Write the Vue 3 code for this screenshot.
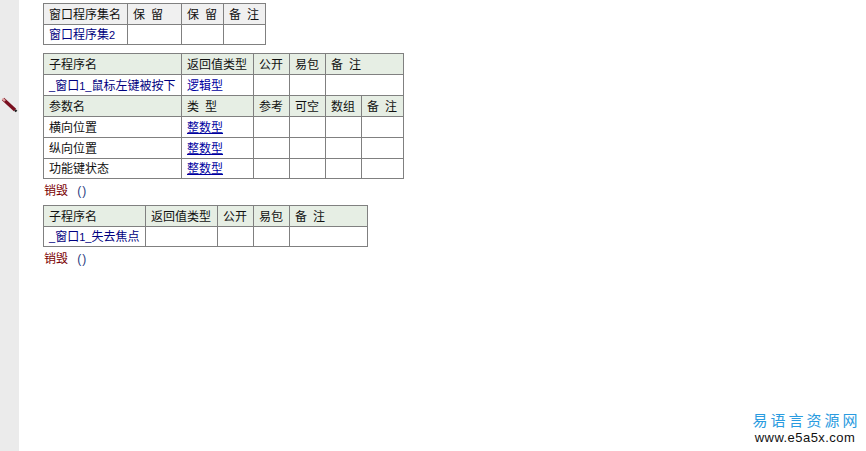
<script setup>
// 子程序表的数据
const params = ['横向位置', '纵向位置', '功能键状态']
</script>

<template>
  <div class="page">
    <div class="side">
      <svg class="pencil" width="18" height="16" viewBox="0 0 18 16">
        <path d="M3 2 L15 13" stroke="#7a1020" stroke-width="3.4" />
        <path d="M15 13 L16.5 14.5" stroke="#222" stroke-width="2.4" />
        <path d="M2.5 1.5 L5 4" stroke="#d9a0a0" stroke-width="2.4" />
      </svg>
    </div>

    <div class="content">
      <table class="tb tb-set">
        <colgroup>
          <col style="width: 84px" />
          <col style="width: 54px" />
          <col style="width: 42px" />
          <col style="width: 42px" />
        </colgroup>
        <tbody>
          <tr class="head-grey">
            <td>窗口程序集名</td>
            <td>保 留</td>
            <td>保 留</td>
            <td>备 注</td>
          </tr>
          <tr>
            <td class="name">窗口程序集<span class="hw">2</span></td>
            <td></td>
            <td></td>
            <td></td>
          </tr>
        </tbody>
      </table>

      <table class="tb tb-sub">
        <colgroup>
          <col style="width: 138px" />
          <col style="width: 72px" />
          <col style="width: 36px" />
          <col style="width: 36px" />
          <col style="width: 36px" />
          <col style="width: 42px" />
        </colgroup>
        <tbody>
          <tr class="head">
            <td>子程序名</td>
            <td>返回值类型</td>
            <td>公开</td>
            <td>易包</td>
            <td colspan="2">备 注</td>
          </tr>
          <tr>
            <td class="name"><span class="hw">_</span>窗口<span class="hw">1_</span>鼠标左键被按下</td>
            <td class="ret">逻辑型</td>
            <td></td>
            <td></td>
            <td colspan="2"></td>
          </tr>
          <tr class="head">
            <td>参数名</td>
            <td>类 型</td>
            <td>参考</td>
            <td>可空</td>
            <td>数组</td>
            <td>备 注</td>
          </tr>
          <tr v-for="p in params" :key="p">
            <td>{{ p }}</td>
            <td class="type">整数型</td>
            <td></td>
            <td></td>
            <td></td>
            <td></td>
          </tr>
        </tbody>
      </table>
      <div class="code"><span class="kw">销毁</span> <span class="num">()</span></div>

      <table class="tb tb-last">
        <colgroup>
          <col style="width: 102px" />
          <col style="width: 72px" />
          <col style="width: 36px" />
          <col style="width: 36px" />
          <col style="width: 78px" />
        </colgroup>
        <tbody>
          <tr class="head">
            <td>子程序名</td>
            <td>返回值类型</td>
            <td>公开</td>
            <td>易包</td>
            <td>备 注</td>
          </tr>
          <tr>
            <td class="name"><span class="hw">_</span>窗口<span class="hw">1_</span>失去焦点</td>
            <td></td>
            <td></td>
            <td></td>
            <td></td>
          </tr>
        </tbody>
      </table>
      <div class="code"><span class="kw">销毁</span> <span class="num">()</span></div>
    </div>

    <div class="logo">
      <div class="logo-cn">易语言资源网</div>
      <div class="logo-en">www.e5a5x.com</div>
    </div>
  </div>
</template>

<style scoped>
.page {
  position: relative;
  display: flex;
  width: 866px;
  height: 451px;
  overflow: hidden;
  background: #fff;
  font-family: "Liberation Sans", "Noto Sans CJK SC", sans-serif;
  font-size: 12px;
  color: #111;
}

.side {
  position: relative;
  flex: none;
  width: 19px;
  background: #ebebeb;
}

.pencil {
  position: absolute;
  left: 0;
  top: 97px;
}

.content {
  padding: 3px 0 0 24px;
}

.tb {
  border-collapse: collapse;
  table-layout: fixed;
}

.tb-set {
  width: 223px;
  margin-bottom: 8px;
}

.tb-sub {
  width: 361px;
}

.tb-last {
  width: 325px;
  margin-top: 2px;
}

.tb td {
  height: 18px;
  padding: 2px 0 0 5px;
  border: 1px solid #808080;
  box-sizing: content-box;
  line-height: 18px;
  word-spacing: 2.7px;
  white-space: nowrap;
  overflow: hidden;
}

/* 每个表格最后一行矮一点 */
.tb tr:last-child td {
  height: 17px;
  line-height: 17px;
}

.head-grey td {
  background: #f0f0f0;
}

.head td {
  background: #e6eee4;
}

.tb .name {
  color: #000080;
}

.tb .ret {
  color: #0000a0;
}

.tb .type {
  color: #0000a0;
  text-decoration: underline;
}

.hw {
  font-size: 11px;
}

.code {
  height: 24px;
  padding-left: 1px;
  line-height: 24px;
}

.kw {
  color: #7a0000;
}

.num {
  margin-left: 6px;
  letter-spacing: 1px;
  color: #2a3a80;
}

.logo {
  position: absolute;
  right: 8px;
  bottom: 6px;
  width: 106px;
  text-align: center;
}

.logo-cn {
  color: #2a9be0;
  font-size: 15px;
  line-height: 18px;
  letter-spacing: 3px;
  margin-right: -3px;
  white-space: nowrap;
}

.logo-en {
  color: #111;
  font-size: 13px;
  line-height: 14px;
  letter-spacing: 0.45px;
  margin-top: 1px;
  white-space: nowrap;
}
</style>

<style>
html,
body {
  margin: 0;
  background: #fff;
}
</style>
